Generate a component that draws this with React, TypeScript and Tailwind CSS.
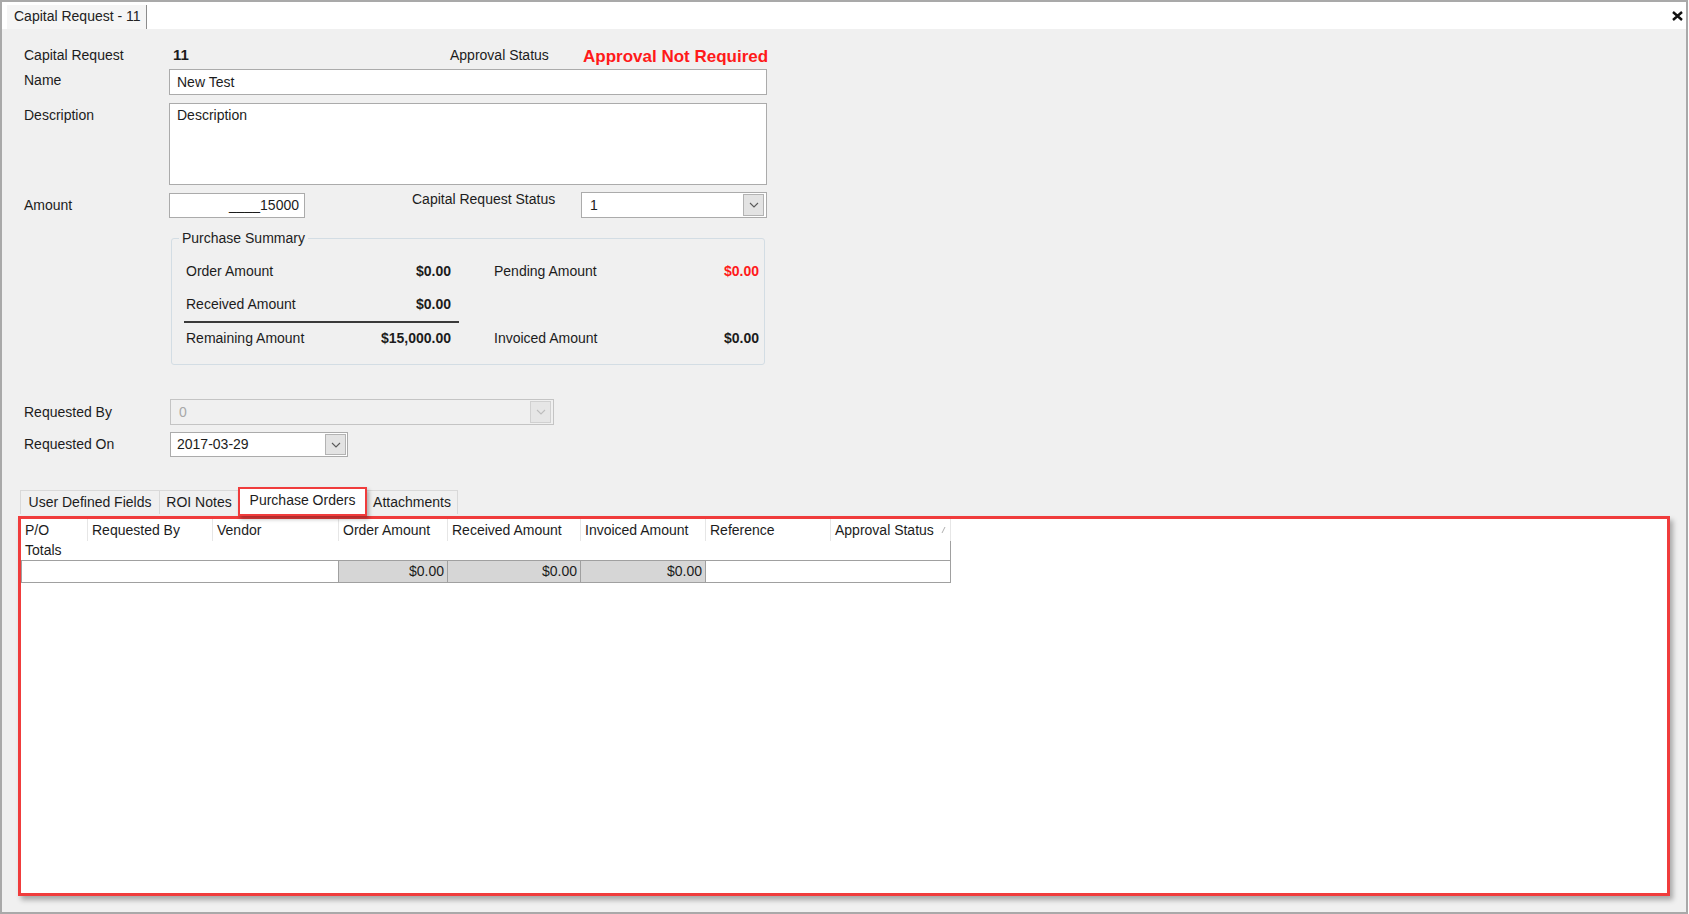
import React from 'react';

const font = { fontFamily: '"Liberation Sans", Arial, sans-serif' };

function Chevron({ disabled = false }: { disabled?: boolean }) {
  return (
    <svg width="10" height="6" viewBox="0 0 10 6" fill="none">
      <path d="M1 1 L5 5 L9 1" stroke={disabled ? '#bdbdbd' : '#5a5a5a'} strokeWidth="1.1" />
    </svg>
  );
}

function Select({ value, width, disabled = false }: { value: string; width: string; disabled?: boolean }) {
  return (
    <div
      className={`${width} h-[26px] flex items-center border ${
        disabled ? 'border-[#c4c4c4] bg-[#f0f0f0] text-[#a8a8a8]' : 'border-[#ababab] bg-white'
      }`}
    >
      <span className="flex-1 pl-[8px] leading-[16px]">{value}</span>
      <div
        className={`w-[21px] h-[22px] mr-[2px] flex items-center justify-center border ${
          disabled ? 'border-[#d0d0d0] bg-[#e6e6e6]' : 'border-[#b3b3b3] bg-[#e3e3e3]'
        }`}
      >
        <Chevron disabled={disabled} />
      </div>
    </div>
  );
}

const cols = [
  { name: 'P/O', w: 'w-[67px]' },
  { name: 'Requested By', w: 'w-[125px]' },
  { name: 'Vendor', w: 'w-[126px]' },
  { name: 'Order Amount', w: 'w-[109px]' },
  { name: 'Received Amount', w: 'w-[133px]' },
  { name: 'Invoiced Amount', w: 'w-[125px]' },
  { name: 'Reference', w: 'w-[125px]' },
  { name: 'Approval Status', w: 'w-[120px]' },
];

export default function App() {
  return (
    <div
      style={font}
      className="w-[1688px] h-[914px] flex flex-col bg-[#f0f0f0] border-2 border-[#a9a9a9] text-[14px] text-[#1c1c1c] overflow-hidden"
    >
      {/* document tab strip */}
      <div className="h-[27px] bg-white flex items-end pl-[5px] shrink-0">
        <div className="w-[140px] h-[24px] bg-[#f5f5f5] border-r border-[#8c8c8c] pl-[7px] leading-[22px] text-[#222]">
          Capital Request - 11
        </div>
        <div className="ml-auto mr-[3px] self-center">
          <svg width="11" height="10" viewBox="0 0 11 10">
            <path d="M1 1 L10 9 M10 1 L1 9" stroke="#111" strokeWidth="2.4" />
          </svg>
        </div>
      </div>

      {/* form */}
      <div className="pl-[22px] flex flex-col">
        <div className="mt-[16px] h-[20px] flex items-center">
          <div className="w-[145px]">Capital Request</div>
          <div className="w-[281px] pl-[4px] font-bold text-[15px]">11</div>
          <div className="w-[133px]">Approval Status</div>
          <div className="w-[184px] text-right font-bold text-[17px] text-[#ff1a1a] mt-[4px] whitespace-nowrap">
            Approval Not Required
          </div>
        </div>

        <div className="mt-[4px] flex">
          <div className="w-[145px] pt-[3px] leading-[16px]">Name</div>
          <div className="w-[598px] h-[26px] border border-[#ababab] bg-white pl-[7px] flex items-center">New Test</div>
        </div>

        <div className="mt-[8px] flex">
          <div className="w-[145px] pt-[4px] leading-[16px]">Description</div>
          <div className="w-[598px] h-[82px] border border-[#ababab] bg-white pl-[7px] pt-[3px] leading-[16px]">
            Description
          </div>
        </div>

        <div className="mt-[7px] flex h-[26px]">
          <div className="w-[145px] self-center">Amount</div>
          <div className="w-[136px] h-[25px] mt-[1px] border border-[#ababab] bg-white pr-[5px] flex items-center justify-end">
            ____15000
          </div>
          <div className="w-[107px]" />
          <div className="w-[169px] leading-[16px] -mt-[1px]">Capital Request Status</div>
          <Select value="1" width="w-[186px]" />
        </div>

        <fieldset className="mt-[11px] ml-[147px] w-[594px] border border-[#d3dde4] rounded-[3px] pb-[16px]">
          <legend className="ml-[7px] px-[3px] leading-[18px] text-[#222]">Purchase Summary</legend>
          <div className="flex pt-[14px]">
            <div className="ml-[12px] w-[275px] flex flex-col">
              <div className="h-[20px] flex items-center justify-between pl-[2px] pr-[8px]">
                <span>Order Amount</span>
                <span className="font-bold">$0.00</span>
              </div>
              <div className="mt-[13px] h-[20px] flex items-center justify-between pl-[2px] pr-[8px]">
                <span>Received Amount</span>
                <span className="font-bold">$0.00</span>
              </div>
              <div className="mt-[7px] h-[2px] bg-[#3a3a3a]" />
              <div className="mt-[5px] h-[20px] flex items-center justify-between pl-[2px] pr-[8px]">
                <span>Remaining Amount</span>
                <span className="font-bold">$15,000.00</span>
              </div>
            </div>
            <div className="ml-[35px] w-[265px] flex flex-col">
              <div className="h-[20px] flex items-center justify-between">
                <span>Pending Amount</span>
                <span className="font-bold text-[#ff1a1a]">$0.00</span>
              </div>
              <div className="mt-[13px] h-[20px]" />
              <div className="mt-[14px] h-[20px] flex items-center justify-between">
                <span>Invoiced Amount</span>
                <span className="font-bold">$0.00</span>
              </div>
            </div>
          </div>
        </fieldset>

        <div className="mt-[34px] flex items-center">
          <div className="w-[146px]">Requested By</div>
          <Select value="0" width="w-[384px]" disabled />
        </div>

        <div className="mt-[7px] flex items-center">
          <div className="w-[146px]">Requested On</div>
          <div className="w-[178px] h-[25px] flex items-center border border-[#ababab] bg-white">
            <span className="flex-1 pl-[6px]">2017-03-29</span>
            <div className="w-[21px] h-[21px] mr-[1px] flex items-center justify-center border border-[#b3b3b3] bg-[#e3e3e3]">
              <Chevron />
            </div>
          </div>
        </div>
      </div>

      {/* tab control */}
      <div className="pl-[16px] flex flex-col">
        <div className="mt-[30px] h-[29px] flex items-end">
          <div className="ml-[2px] h-[24px] w-[139px] mb-[2px] border-t border-l border-[#d9d9d9] flex items-center justify-center">
            User Defined Fields
          </div>
          <div className="h-[24px] w-[79px] mb-[2px] border-t border-l border-[#d9d9d9] flex items-center justify-center">
            ROI Notes
          </div>
          <div className="h-[29px] w-[129px] border-2 border-[#f03c3c] bg-white shadow-[2px_3px_4px_rgba(0,0,0,0.3)] flex items-center justify-center pb-[3px] relative z-10">
            Purchase Orders
          </div>
          <div className="h-[24px] w-[91px] mb-[2px] border-t border-r border-[#d9d9d9] flex items-center justify-center">
            Attachments
          </div>
        </div>

        <div className="w-[1652px] h-[380px] border-[3px] border-[#f03c3c] bg-white shadow-[3px_4px_5px_rgba(0,0,0,0.3)] flex flex-col">
          <div className="h-[22px] flex">
            {cols.map((c) => (
              <div
                key={c.name}
                className={`${c.w} h-full border-r border-[#e6e6e6] pl-[4px] flex items-center justify-between pr-[4px]`}
              >
                <span>{c.name}</span>
                {c.name === 'Approval Status' && (
                  <svg width="5" height="8" viewBox="0 0 5 8">
                    <path d="M1 7 L4 1" stroke="#b0b0b0" strokeWidth="1" />
                  </svg>
                )}
              </div>
            ))}
          </div>
          <div className="w-[930px] h-[19px] border-r border-[#a0a0a0] pl-[4px] leading-[18px]">Totals</div>
          <div className="w-[930px] h-[23px] flex border border-[#a0a0a0]">
            <div className="w-[317px] border-r border-[#a0a0a0]" />
            <div className="w-[109px] bg-[#d6d6d6] border-r border-[#a0a0a0] text-right pr-[3px] leading-[21px]">$0.00</div>
            <div className="w-[133px] bg-[#d6d6d6] border-r border-[#a0a0a0] text-right pr-[3px] leading-[21px]">$0.00</div>
            <div className="w-[125px] bg-[#d6d6d6] border-r border-[#a0a0a0] text-right pr-[3px] leading-[21px]">$0.00</div>
            <div className="flex-1" />
          </div>
        </div>
      </div>
    </div>
  );
}
